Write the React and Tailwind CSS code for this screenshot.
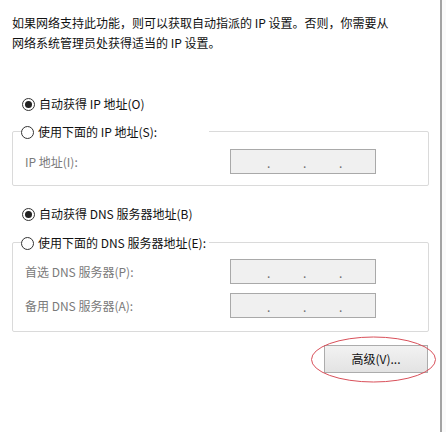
import React from 'react'

const font = "font-['Noto_Sans_CJK_SC',sans-serif]"

function Radio({ checked, label, className = '' }) {
  return (
    <div className={`flex h-[24px] items-center ${className}`}>
      <span className="flex h-[13px] w-[13px] items-center justify-center rounded-full border border-[#333333] bg-white">
        {checked && <span className="h-[7px] w-[7px] rounded-full bg-[#222222]" />}
      </span>
      <span className="ml-[4px] text-[12px] leading-none text-[#111111]">{label}</span>
    </div>
  )
}

function IpBox() {
  return (
    <div className="flex h-[25px] w-[146px] items-center border border-[#a9a9a9] bg-[#f0f0f0] text-[12px] text-[#6d6d6d]">
      <span className="flex-1" />
      <span className="w-0 translate-y-[1px] leading-none">.</span>
      <span className="flex-1" />
      <span className="w-0 translate-y-[1px] leading-none">.</span>
      <span className="flex-1" />
      <span className="w-0 translate-y-[1px] leading-none">.</span>
      <span className="flex-1" />
    </div>
  )
}

function FieldRow({ label, className = '' }) {
  return (
    <div className={`flex items-center ${className}`}>
      <span className="w-[217px] pl-[12px] text-[12px] leading-none text-[#7a7a7a]">{label}</span>
      <IpBox />
    </div>
  )
}

function GroupBox({ legend, children, className = '' }) {
  return (
    <div className={`w-[417px] rounded-[2px] border border-[#dadada] ${className}`}>
      <div className="-mt-[12px] ml-[8px] w-[188px] bg-white">
        <Radio label={legend} />
      </div>
      {children}
    </div>
  )
}

export default function App() {
  return (
    <div className={`relative flex h-[432px] w-[446px] overflow-hidden bg-white ${font}`}>
      <div className="w-[440px] pl-[12px]">
        <p className="pt-[13px] pl-[-1px] text-[12px] leading-[20px] text-[#111111]">
          如果网络支持此功能，则可以获取自动指派的 IP 设置。否则，你需要从
          <br />
          网络系统管理员处获得适当的 IP 设置。
        </p>

        <Radio checked label="自动获得 IP 地址(O)" className="mt-[39px] pl-[10px]" />
        <GroupBox legend="使用下面的 IP 地址(S):" className="mt-[15px]">
          <FieldRow label="IP 地址(I):" className="mt-[5px] mb-[11px]" />
        </GroupBox>

        <Radio checked label="自动获得 DNS 服务器地址(B)" className="mt-[16px] pl-[10px]" />
        <GroupBox legend="使用下面的 DNS 服务器地址(E):" className="mt-[16px] pb-[13px]">
          <FieldRow label="首选 DNS 服务器(P):" className="mt-[4px]" />
          <FieldRow label="备用 DNS 服务器(A):" className="mt-[9px]" />
        </GroupBox>

        <div className="mt-[13px] flex w-[416px] justify-end">
          <button className="h-[28px] w-[104px] border border-[#acacac] bg-gradient-to-b from-[#f2f2f2] to-[#e3e3e3] text-[12px] leading-none text-[#111111]">
            高级(V)...
          </button>
        </div>
      </div>
      <div className="w-[2px] bg-[#a3a3a3]" />
      <div className="flex-1 bg-[#fafafa]" />

      <svg className="pointer-events-none absolute left-0 top-0" width="446" height="432">
        <ellipse cx="373.5" cy="359.5" rx="62" ry="22.5" fill="none" stroke="#d9505a" strokeWidth="1" />
      </svg>
    </div>
  )
}
